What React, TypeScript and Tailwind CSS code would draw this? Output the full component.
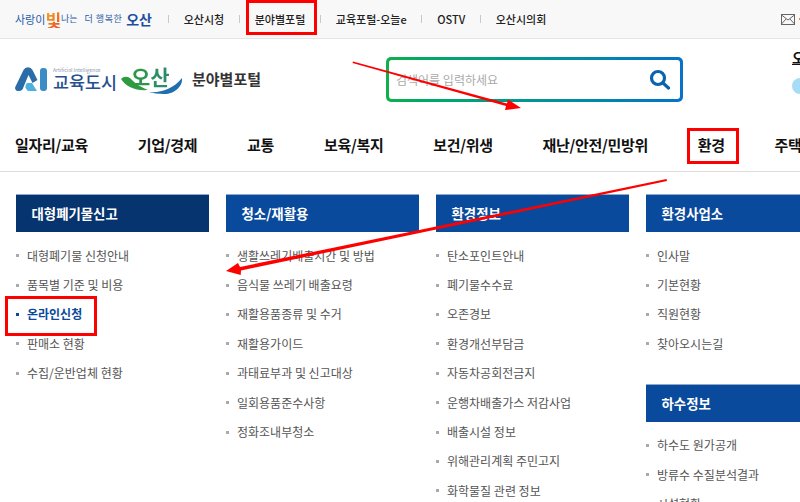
import React from 'react';

const FONT = "font-['Noto_Sans_CJK_KR','Noto_Sans',sans-serif]";

const topLinks = ['오산시청', '분야별포털', '교육포털-오늘e', 'OSTV', '오산시의회'];
const navItems = ['일자리/교육', '기업/경제', '교통', '보육/복지', '보건/위생', '재난/안전/민방위', '환경', '주택'];

interface MenuItem {
    label: string;
    active?: boolean;
}

interface MenuGroup {
    title: string;
    dark?: boolean;
    items: MenuItem[];
}

const MenuHeading = ({ title, dark }: { title: string; dark?: boolean }) => (
    <div className={`h-[38px] flex items-center pl-[15.5px] text-[13.4px] font-bold text-white border-t border-[#8fa9cf] ${dark ? 'bg-[#05346f]' : 'bg-[#0a4a9c]'}`}>
        {title}
    </div>
);

const MenuList = ({ items }: { items: MenuItem[] }) => (
    <ul className="mt-[9px]">
        {items.map((item) => (
            <li
                key={item.label}
                className={`h-[29.4px] flex items-center text-[12px] ${item.active ? 'font-bold text-[#0a4a9c]' : 'text-[#555555]'}`}
            >
                <span className={`w-[3px] h-[3px] mr-[8px] shrink-0 ${item.active ? 'bg-[#0a4a9c]' : 'bg-[#aaaaaa]'}`} />
                {item.label}
            </li>
        ))}
    </ul>
);

const columns: MenuGroup[] = [
    {
        title: '대형폐기물신고',
        dark: true,
        items: [
            { label: '대형폐기물 신청안내' },
            { label: '품목별 기준 및 비용' },
            { label: '온라인신청', active: true },
            { label: '판매소 현황' },
            { label: '수집/운반업체 현황' },
        ],
    },
    {
        title: '청소/재활용',
        items: [
            { label: '생활쓰레기배출시간 및 방법' },
            { label: '음식물 쓰레기 배출요령' },
            { label: '재활용품종류 및 수거' },
            { label: '재활용가이드' },
            { label: '과태료부과 및 신고대상' },
            { label: '일회용품준수사항' },
            { label: '정화조내부청소' },
        ],
    },
    {
        title: '환경정보',
        items: [
            { label: '탄소포인트안내' },
            { label: '폐기물수수료' },
            { label: '오존경보' },
            { label: '환경개선부담금' },
            { label: '자동차공회전금지' },
            { label: '운행차배출가스 저감사업' },
            { label: '배출시설 정보' },
            { label: '위해관리계획 주민고지' },
            { label: '화학물질 관련 정보' },
        ],
    },
];

const App: React.FC = () => {
    return (
        <div className={`relative w-[800px] h-[502px] overflow-hidden bg-white ${FONT}`}>
            {/* top utility bar */}
            <div className="h-[39px] bg-[#f8f8f8] border-b border-[#e4e4e4] flex items-center pl-[15px] whitespace-nowrap">
                <div className="w-[153px] flex items-center text-[11px] text-[#2a5ea8]">
                    <span>사랑이</span>
                    <span className="text-[17px] leading-none font-bold bg-gradient-to-br from-[#f5b020] to-[#e83a20] bg-clip-text text-transparent">빛</span>
                    <span className="text-[9px]">나는</span>
                    <span className="text-[9px] ml-[7px] tracking-[0.5px]">더 행복한</span>
                    <span className="ml-[4px] text-[14px] font-bold text-[#1c4f9c]">오산</span>
                </div>
                {topLinks.map((link) => (
                    <React.Fragment key={link}>
                        <span className="w-px h-[8px] bg-[#c8c8c8]" />
                        <span className="px-[14.75px] text-[11px] font-medium text-[#222222]">{link}</span>
                    </React.Fragment>
                ))}
                <svg className="ml-auto" width="14" height="11" viewBox="0 0 14 11" fill="none" stroke="#666666">
                    <rect x="0.5" y="0.5" width="13" height="10" />
                    <path d="M0.5 1 7 6l6.5-5M0.5 10 5 5M13.5 10 9 5" />
                </svg>
                <span className="ml-[4px] w-px h-[2px] bg-[#e09040]" />
            </div>

            {/* logo + search */}
            <div className="h-[81px] flex items-center pl-[15px] whitespace-nowrap">
                <div className="w-[371px] shrink-0 flex items-center">
                    <svg width="33" height="25" viewBox="0 0 33 25">
                        <path d="M3 24a3 3 0 0 1-2.500-4.500L8.500 3a5 5 0 0 1 9 0l5 10-5 3-4-8-5 12a5 5 0 0 1-5.500 4z" fill="#2a6ca8" />
                        <path d="M12 16h5l5 8h-9a5 5 0 0 1-1-8z" fill="#4fb0e0" />
                        <rect x="25" y="1" width="7" height="23" rx="3" fill="#3c8cc8" />
                    </svg>
                    <div className="ml-[5px] flex flex-col">
                        <span className="h-[5px] text-[5px] leading-[5px] text-[#8a9ab0]">Artificial Intelligence</span>
                        <span className="h-[20px] text-[17.400px] leading-[20px] font-medium text-[#27508f]">교육도시</span>
                    </div>
                    <div className="relative ml-[4px] w-[63px] h-[28px]">
                        <svg className="absolute left-0 top-0" width="63" height="28" viewBox="0 0 63 28">
                            <path d="M0 13c3-3 7-3 10 0 4 4 9 8 17 11-12 1-22-3-27-11z" fill="#2f9b3f" />
                            <path d="M28 26c12 1 24-3 33-14 1 8-7 16-18 16-6 0-11-1-15-2z" fill="#1d6fb0" />
                        </svg>
                        <span className="absolute left-[10px] top-[-4px] text-[21px] leading-[28px] font-bold bg-gradient-to-r from-[#2c9a3e] to-[#2a8a70] bg-clip-text text-transparent">오산</span>
                    </div>
                    <span className="ml-[8px] text-[15px] font-bold text-[#333333]">분야별포털</span>
                </div>
                <div className="w-[297px] h-[45px] shrink-0 rounded-[5px] p-[3px] bg-gradient-to-r from-[#10b04a] to-[#0a72c8]">
                    <div className="h-full rounded-[3px] bg-white flex items-center pl-[7px] pr-[10px] justify-between">
                        <span className="text-[12px] text-[#aaaaaa]">검색어를 입력하세요</span>
                        <svg width="21" height="21" viewBox="0 0 21 21" fill="none" stroke="#0a62b0" strokeWidth="3.2">
                            <circle cx="9" cy="9" r="6.500" />
                            <path d="M14 14l5.500 5" strokeLinecap="round" />
                        </svg>
                    </div>
                </div>
                <div className="ml-[109px] shrink-0 self-start mt-[8px] flex flex-col">
                    <span className="text-[14px] leading-[20px] font-bold text-[#111111] underline">오산</span>
                    <svg className="mt-[10px]" width="20" height="18" viewBox="0 0 20 18">
                        <circle cx="8" cy="9" r="8" fill="#a6dcf7" />
                    </svg>
                </div>
            </div>

            {/* main nav */}
            <div className="h-[52px] border-b border-[#dddddd] flex items-center pl-[15px] whitespace-nowrap">
                {navItems.map((item, i) => (
                    <React.Fragment key={item}>
                        {i > 0 && <span className="w-px h-[15px] mx-[24.9px] bg-[#dddddd]" />}
                        <span className="text-[15px] font-bold tracking-[-0.3px] text-[#111111]">{item}</span>
                    </React.Fragment>
                ))}
            </div>

            {/* sitemap columns */}
            <div className="mt-[22px] ml-[16px] grid grid-cols-[193px_193px_193px_193px] gap-x-[17px]">
                {columns.map((col) => (
                    <div key={col.title}>
                        <MenuHeading title={col.title} dark={col.dark} />
                        <MenuList items={col.items} />
                    </div>
                ))}
                <div>
                    <MenuHeading title="환경사업소" />
                    <MenuList items={[{ label: '인사말' }, { label: '기본현황' }, { label: '직원현황' }, { label: '찾아오시는길' }]} />
                    <div className="mt-[25px]">
                        <MenuHeading title="하수정보" />
                    </div>
                    <MenuList items={[{ label: '하수도 원가공개' }, { label: '방류수 수질분석결과' }, { label: '시설현황' }]} />
                </div>
            </div>

            {/* red annotation overlay */}
            <div className="absolute left-[246px] top-0 w-[71px] h-[35px] border-[3px] border-[#ff0000]" />
            <div className="absolute left-[687px] top-[128px] w-[52px] h-[36px] border-[3px] border-[#ff0000]" />
            <div className="absolute left-[5px] top-[296px] w-[92px] h-[40px] border-[3px] border-[#ff0000]" />
            <svg className="absolute left-0 top-0" width="800" height="502" viewBox="0 0 800 502" fill="#ff0000" stroke="none">
                <path d="M353 61.500 L507 103.500 L508 99.500 L521 108 L505 110 L506 106 L352.500 63Z" />
                <path d="M666.500 179 L667 181 L241 270.500 L240.700 275 L226 271 L238 263 L240 267Z" />
            </svg>
        </div>
    );
};

export default App;
